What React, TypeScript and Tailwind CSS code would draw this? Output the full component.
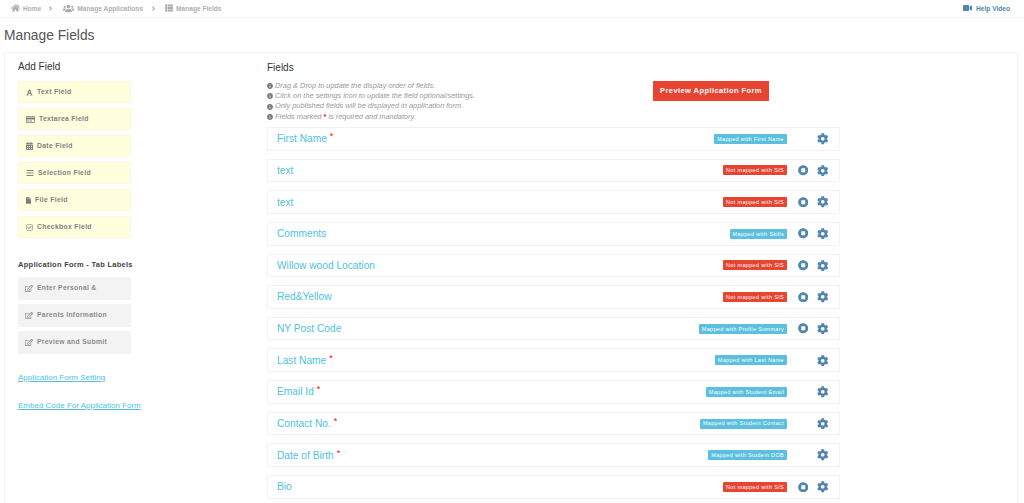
import { ReactNode } from "react";
import {
  FaHome,
  FaUsers,
  FaThList,
  FaChevronRight,
  FaVideo,
  FaFont,
  FaRegCreditCard,
  FaCalendarAlt,
  FaBars,
  FaFile,
  FaRegCheckSquare,
  FaRegEdit,
  FaInfoCircle,
  FaCog,
  FaStopCircle,
} from "react-icons/fa";

interface fieldRow {
  name: string;
  required?: boolean;
  label: string;
  mapped: boolean;
  removable?: boolean;
}

const addFields: { label: string; icon: ReactNode }[] = [
  { label: "Text Field", icon: <FaFont className="w-[7px] h-[7px]" /> },
  { label: "Textarea Field", icon: <FaRegCreditCard className="w-[9px] h-[9px]" /> },
  { label: "Date Field", icon: <FaCalendarAlt className="w-[7px] h-[8px]" /> },
  { label: "Selection Field", icon: <FaBars className="w-[8px] h-[8px]" /> },
  { label: "File Field", icon: <FaFile className="w-[5px] h-[7px]" /> },
  { label: "Checkbox Field", icon: <FaRegCheckSquare className="w-[7px] h-[7px]" /> },
];

const tabLabels = ["Enter Personal &", "Parents Information", "Preview and Submit"];

const notes = [
  "Drag & Drop to update the display order of fields.",
  "Click on the settings icon to update the field optional/settings.",
  "Only published fields will be displayed in application form.",
];

const rows: fieldRow[] = [
  { name: "First Name", required: true, label: "Mapped with First Name", mapped: true },
  { name: "text", label: "Not mapped with SIS", mapped: false, removable: true },
  { name: "text", label: "Not mapped with SIS", mapped: false, removable: true },
  { name: "Comments", label: "Mapped with Skills", mapped: true, removable: true },
  { name: "Willow wood Location", label: "Not mapped with SIS", mapped: false, removable: true },
  { name: "Red&Yellow", label: "Not mapped with SIS", mapped: false, removable: true },
  { name: "NY Post Code", label: "Mapped with Profile Summary", mapped: true, removable: true },
  { name: "Last Name", required: true, label: "Mapped with Last Name", mapped: true },
  { name: "Email Id", required: true, label: "Mapped with Student Email", mapped: true },
  { name: "Contact No.", required: true, label: "Mapped with Student Contact", mapped: true },
  { name: "Date of Birth", required: true, label: "Mapped with Student DOB", mapped: true },
  { name: "Bio", label: "Not mapped with SIS", mapped: false, removable: true },
];

function Crumb(props: { icon: ReactNode; label: string }) {
  return (
    <div className="flex items-center gap-[3px]">
      <span className="text-[#aaa]">{props.icon}</span>
      <span>{props.label}</span>
    </div>
  );
}

function Row({ row }: { row: fieldRow }) {
  return (
    <div className="flex items-center h-[23.65px] mb-2 pl-[9px] border border-[#f2f2f2] bg-white">
      <div className="text-[10.2px] leading-none text-[#4fc1e0] relative top-[0.5px]">
        {row.name}
        {row.required && <span className="text-[#f00] text-[9px] relative top-[-3px] left-[3px]">*</span>}
      </div>
      <span
        className={
          row.mapped
            ? "ml-auto h-[10px] px-[3px] flex items-center rounded-[1px] bg-[#5bc0de] text-white text-[5.5px] tracking-[0.33px]"
            : "ml-auto h-[10px] px-[3px] flex items-center rounded-[1px] bg-[#e74432] text-white text-[5.5px] tracking-[0.33px]"
        }
      >
        {row.label}
      </span>
      <div className="w-[12px] ml-[10px] flex justify-center">
        {row.removable && <FaStopCircle className="w-[10.5px] h-[10.5px] text-[#5187ad]" />}
      </div>
      <div className="ml-[8px] mr-[10px] w-[12px] flex justify-center">
        <FaCog className="w-[11.5px] h-[11.5px] text-[#5187ad]" />
      </div>
    </div>
  );
}

export default function App() {
  return (
    <div className="w-[1024px] h-[503px] overflow-hidden bg-white font-['Liberation_Sans',Arial,sans-serif]">
      <div className="h-[18px] flex items-center pl-[11px] border-b border-[#f3f3f3] text-[6.6px] font-bold text-[#b0b0b0]">
        <Crumb icon={<FaHome className="w-[9px] h-[8px]" />} label="Home" />
        <FaChevronRight className="w-[5px] h-[5px] ml-[7px] mr-[10px] text-[#888]" />
        <Crumb icon={<FaUsers className="w-[11px] h-[9px]" />} label="Manage Applications" />
        <FaChevronRight className="w-[5px] h-[5px] ml-[8px] mr-[9px] text-[#888]" />
        <Crumb icon={<FaThList className="w-[8px] h-[8px]" />} label="Manage Fields" />
        <div className="ml-auto mr-[14px] flex items-center gap-[4px] text-[#5187ad]">
          <FaVideo className="w-[9px] h-[8px]" />
          <span>Help Video</span>
        </div>
      </div>
      <h1 className="h-[34px] pl-[4px] pt-[9px] text-[13.8px] leading-[18px] font-normal text-[#555]">Manage Fields</h1>
      <div className="ml-[4px] mr-[6px] h-[460px] flex border border-[#f3f3f3] pl-[13px]">
        <div className="w-[113px] shrink-0">
          <h2 className="text-[10px] leading-none font-normal text-[#333] mt-[9px] mb-[9px]">Add Field</h2>
          {addFields.map((f) => (
            <div
              key={f.label}
              className="h-[22px] mb-[5px] pl-[7px] flex items-center gap-[4px] bg-[#ffffdd] border border-[#f8f8dc] text-[6.8px] font-bold tracking-[0.33px] text-[#808080]"
            >
              {f.icon}
              <span>{f.label}</span>
            </div>
          ))}
          <h3 className="mt-[22px] mb-[8px] whitespace-nowrap text-[7.5px] leading-[9px] font-bold tracking-[0.27px] text-[#444]">
            Application Form - Tab Labels
          </h3>
          {tabLabels.map((t) => (
            <div
              key={t}
              className="h-[23px] mb-[4px] pl-[7px] flex items-center gap-[4px] bg-[#f3f3f3] text-[6.8px] font-bold tracking-[0.3px] text-[#8c8c8c]"
            >
              <FaRegEdit className="w-[8px] h-[7px]" />
              <span>{t}</span>
            </div>
          ))}
          <a className="block mt-[19px] text-[8px] leading-[10px] text-[#4fc1e0] underline whitespace-nowrap">Application Form Setting</a>
          <a className="block mt-[18px] text-[8px] leading-[10px] text-[#4fc1e0] underline whitespace-nowrap">Embed Code For Application Form</a>
        </div>
        <div className="ml-[136px] w-[573px] shrink-0">
          <h2 className="text-[10px] leading-none font-normal text-[#333] mt-[10px] mb-[8px]">Fields</h2>
          <div className="relative h-[46px]">
            <ul className="text-[7.4px] leading-[10.2px] italic text-[#999]">
              {notes.map((n) => (
                <li key={n} className="flex items-center gap-[2px]">
                  <FaInfoCircle className="w-[6px] h-[6px] text-[#777]" />
                  <span>{n}</span>
                </li>
              ))}
              <li className="flex items-center gap-[2px]">
                <FaInfoCircle className="w-[6px] h-[6px] text-[#777]" />
                <span>
                  Fields marked <b className="text-[#f00] not-italic">*</b> is required and mandatory.
                </span>
              </li>
            </ul>
            <button className="absolute left-[386px] top-0 w-[116px] h-[20px] bg-[#e74432] text-white text-[7.5px] font-bold tracking-[0.42px]">
              Preview Application Form
            </button>
          </div>
          {rows.map((r, i) => (
            <Row key={i} row={r} />
          ))}
        </div>
      </div>
    </div>
  );
}
